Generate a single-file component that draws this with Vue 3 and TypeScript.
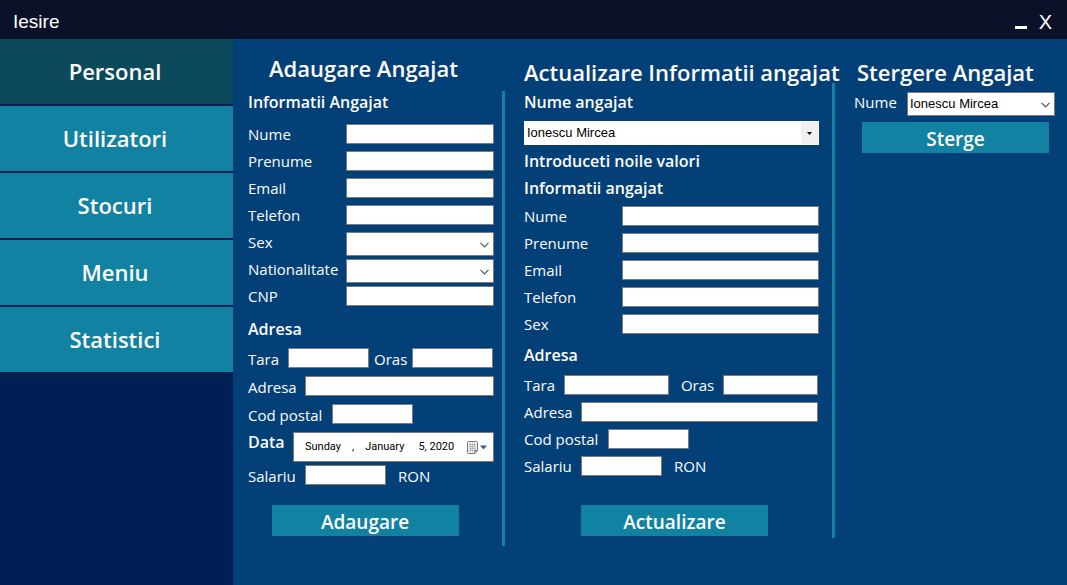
<script setup lang="ts">
import { ref } from 'vue'

const sections = ['Personal', 'Utilizatori', 'Stocuri', 'Meniu', 'Statistici']
const active = ref('Personal')

const employees = ['Ionescu Mircea']
const selectedUpdate = ref(employees[0])
const selectedDelete = ref(employees[0])

interface Field {
  id: string
  label: string
  kind: 'text' | 'select'
}

const newFields: Field[] = [
  { id: 'new-nume', label: 'Nume', kind: 'text' },
  { id: 'new-prenume', label: 'Prenume', kind: 'text' },
  { id: 'new-email', label: 'Email', kind: 'text' },
  { id: 'new-telefon', label: 'Telefon', kind: 'text' },
  { id: 'new-sex', label: 'Sex', kind: 'select' },
  { id: 'new-nationalitate', label: 'Nationalitate', kind: 'select' },
  { id: 'new-cnp', label: 'CNP', kind: 'text' },
]

const editFields: Field[] = [
  { id: 'edit-nume', label: 'Nume', kind: 'text' },
  { id: 'edit-prenume', label: 'Prenume', kind: 'text' },
  { id: 'edit-email', label: 'Email', kind: 'text' },
  { id: 'edit-telefon', label: 'Telefon', kind: 'text' },
  { id: 'edit-sex', label: 'Sex', kind: 'text' },
]
</script>

<template>
  <div class="app">
    <header class="titlebar">
      <button type="button" class="exit">Iesire</button>
      <div class="window-controls">
        <button type="button" class="minimize" aria-label="Minimizare">
          <svg width="12" height="15" viewBox="0 0 12 15"><rect y="12" width="12" height="3" fill="#fff" /></svg>
        </button>
        <button type="button" class="close" aria-label="Inchide">X</button>
      </div>
    </header>

    <div class="body">
      <nav class="sidebar">
        <button
          v-for="s in sections"
          :key="s"
          type="button"
          class="nav-item"
          :class="{ active: s === active }"
          @click="active = s"
        >{{ s }}</button>
      </nav>

      <main class="panels">
        <form class="panel add" @submit.prevent>
          <h1 class="title centered">Adaugare Angajat</h1>
          <h2 class="heading">Informatii Angajat</h2>
          <div class="fields">
            <div v-for="f in newFields" :key="f.id" class="row">
              <label class="wide-label" :for="f.id">{{ f.label }}</label>
              <input v-if="f.kind === 'text'" :id="f.id" type="text" class="grow" />
              <span v-else class="combo grow">
                <select :id="f.id"><option value=""></option></select>
                <svg class="chevron" width="9" height="6" viewBox="0 0 9 6"><path d="M.5 .8 4.5 4.8 8.5 .8" fill="none" stroke="#555" stroke-width="1.2" /></svg>
              </span>
            </div>
          </div>

          <h2 class="heading">Adresa</h2>
          <div class="fields loose">
            <div class="row split">
              <label class="tara-label" for="new-tara">Tara</label>
              <input id="new-tara" type="text" class="grow" />
              <label class="oras-label" for="new-oras">Oras</label>
              <input id="new-oras" type="text" class="grow" />
            </div>
            <div class="row">
              <label class="short-label" for="new-adresa">Adresa</label>
              <input id="new-adresa" type="text" class="grow" />
            </div>
            <div class="row">
              <label class="postal-label" for="new-cod">Cod postal</label>
              <input id="new-cod" type="text" class="small" />
            </div>
            <div class="row date-row">
              <label class="date-label" for="new-data">Data</label>
              <button id="new-data" type="button" class="date grow" aria-haspopup="dialog">
                <span>Sunday</span><span>,</span><span>January</span><span class="day">5, 2020</span>
                <svg width="20" height="13" viewBox="0 0 20 13">
                  <path d="M.5 1.5Q.5.5 1.5.5H9.500Q10.500.5 10.500 1.500V9.500L8 12.500H1.500Q.5 12.500.5 11.500Z" fill="#f3f1f1" stroke="#7d7474" />
                  <path d="M2 3.500H9M2 5.500H9M2 7.500H9M2 9.500H7M3.500 2V11M5.500 2V11M7.500 2V11" stroke="#a9a9b5" stroke-width=".7" />
                  <path d="M10.500 9.500H8V12.500" fill="none" stroke="#7d7474" />
                  <path d="M13 4.500H20L16.500 8.500Z" fill="#40587c" />
                </svg>
              </button>
            </div>
            <div class="row">
              <label class="short-label" for="new-salariu">Salariu</label>
              <input id="new-salariu" type="text" class="small" />
              <span class="unit">RON</span>
            </div>
          </div>
          <button type="submit" class="action">Adaugare</button>
        </form>

        <div class="divider"></div>

        <form class="panel edit" @submit.prevent>
          <h1 class="title">Actualizare Informatii angajat</h1>
          <label class="heading" for="edit-angajat">Nume angajat</label>
          <span class="combo flat">
            <select id="edit-angajat" v-model="selectedUpdate">
              <option v-for="e in employees" :key="e">{{ e }}</option>
            </select>
            <span class="drop"><svg width="5" height="3" viewBox="0 0 5 3"><path d="M0 0H5L2.500 3Z" fill="#000" /></svg></span>
          </span>
          <h2 class="heading">Introduceti noile valori</h2>
          <h2 class="heading">Informatii angajat</h2>
          <div class="fields">
            <div v-for="f in editFields" :key="f.id" class="row">
              <label class="wide-label" :for="f.id">{{ f.label }}</label>
              <input :id="f.id" type="text" class="grow" />
            </div>
          </div>

          <h2 class="heading">Adresa</h2>
          <div class="fields">
            <div class="row split">
              <label class="tara-label" for="edit-tara">Tara</label>
              <input id="edit-tara" type="text" class="grow country" />
              <label class="oras-label" for="edit-oras">Oras</label>
              <input id="edit-oras" type="text" class="grow city" />
            </div>
            <div class="row split">
              <label class="short-label" for="edit-adresa">Adresa</label>
              <input id="edit-adresa" type="text" class="grow" />
            </div>
            <div class="row">
              <label class="postal-label" for="edit-cod">Cod postal</label>
              <input id="edit-cod" type="text" class="small" />
            </div>
            <div class="row">
              <label class="short-label" for="edit-salariu">Salariu</label>
              <input id="edit-salariu" type="text" class="small" />
              <span class="unit">RON</span>
            </div>
          </div>
          <button type="submit" class="action">Actualizare</button>
        </form>

        <div class="divider second"></div>

        <form class="panel remove" @submit.prevent>
          <h1 class="title">Stergere Angajat</h1>
          <div class="row">
            <label for="del-angajat">Nume</label>
            <span class="combo grow">
              <select id="del-angajat" v-model="selectedDelete">
                <option v-for="e in employees" :key="e">{{ e }}</option>
              </select>
              <svg class="chevron" width="9" height="6" viewBox="0 0 9 6"><path d="M.5 .8 4.5 4.8 8.5 .8" fill="none" stroke="#555" stroke-width="1.2" /></svg>
            </span>
          </div>
          <button type="submit" class="action">Sterge</button>
        </form>
      </main>
    </div>
  </div>
</template>

<style>
body {
  margin: 0;
  background: #034078;
}
</style>

<style scoped>
.app {
  display: flex;
  flex-direction: column;
  min-height: 100vh;
  background: #034078;
  color: #fefcfb;
  font-family: 'Open Sans', 'Noto Sans', sans-serif;
  font-size: 15px;
  line-height: 20px;
}
* {
  box-sizing: border-box;
}
button,
input,
select {
  margin: 0;
  padding: 0;
  border: 0;
  border-radius: 0;
  font: inherit;
  color: inherit;
}
button {
  background: none;
  cursor: pointer;
}
h1,
h2 {
  margin: 0;
}

.titlebar {
  display: flex;
  align-items: center;
  justify-content: space-between;
  height: 39px;
  padding: 4px 15px 0 13px;
  background: #0a1128;
  color: #fff;
  font-family: 'Liberation Sans', Arial, sans-serif;
  font-size: 19px;
}
.window-controls {
  display: flex;
  align-items: center;
  gap: 12px;
}
.minimize svg {
  display: block;
}
.close {
  font-size: 20px;
}

.body {
  display: flex;
  flex: 1;
}
.sidebar {
  display: flex;
  flex-direction: column;
  flex: 0 0 233px;
  gap: 2px;
  background: #001f54;
}
.nav-item {
  height: 65px;
  padding: 0 3px 2px 0;
  background: #1282a2;
  font-size: 22px;
  font-weight: 600;
}
.nav-item.active {
  background: #0c4a5b;
}

.panels {
  flex: 1;
  min-width: 0;
  display: grid;
  grid-template-columns: minmax(0, 269fr) 3px minmax(0, 327fr) 3px minmax(0, 232fr);
  align-items: start;
}
.divider {
  height: 455px;
  margin-top: 52px;
  background: #1282a2;
}
.divider.second {
  margin-top: 44px;
}
.panel {
  display: flex;
  flex-direction: column;
}
.add {
  padding: 14px 8px 0 15px;
}
.edit {
  padding: 18px 13px 0 19px;
}
.remove {
  padding: 18px 12px 0 19px;
}
.title {
  font-size: 22px;
  font-weight: 600;
  line-height: 30px;
  white-space: nowrap;
}
.title.centered {
  padding-right: 15px;
  text-align: center;
}
.heading {
  font-size: 16px;
  font-weight: 600;
  line-height: 20px;
}
.add .heading {
  margin: 9px 0 12px;
}
.fields {
  display: flex;
  flex-direction: column;
  gap: 7px;
}
.fields.loose {
  gap: 8px;
}
.row {
  display: flex;
  align-items: flex-start;
  height: 20px;
}
.row.split {
  padding-right: 1px;
}
.row.date-row {
  height: 25px;
}
.loose label,
.loose .unit {
  line-height: 22px;
}
.grow {
  flex: 1 1 0;
  min-width: 0;
}
.country {
  flex-grow: 105;
}
.city {
  flex-grow: 95;
}
.small {
  width: 81px;
}
.wide-label {
  width: 98px;
}
.tara-label {
  width: 40px;
}
.oras-label {
  width: 43px;
  padding-left: 5px;
}
.edit .oras-label {
  width: 54px;
  padding-left: 12px;
}
.short-label {
  width: 57px;
}
.postal-label {
  width: 84px;
}
.loose .date-label {
  width: 45px;
  font-size: 16px;
  font-weight: 600;
  line-height: 20px;
}
.unit {
  padding-left: 12px;
}

input,
.date,
.combo {
  height: 20px;
  border: 1px solid #7a7a7a;
  background: #fff;
  color: #000;
  font-family: 'Liberation Sans', Arial, sans-serif;
  font-size: 13px;
}
.combo {
  display: grid;
  grid-template-columns: minmax(0, 1fr) 17px;
  align-items: center;
  height: 24px;
}
.combo select {
  grid-area: 1 / 1 / 2 / 3;
  width: 100%;
  height: 22px;
  padding: 0 18px 0 2px;
  appearance: none;
  background: transparent;
}
.chevron {
  grid-area: 1 / 2;
  justify-self: center;
  margin-top: 2px;
  pointer-events: none;
}
.combo.flat {
  border-color: #fff;
}
.drop {
  grid-area: 1 / 2;
  display: grid;
  place-items: center;
  height: 22px;
  background: #f0f0f0;
  pointer-events: none;
}
.date {
  display: flex;
  align-items: center;
  gap: 11px;
  height: 30px;
  padding: 0 6px 0 11px;
  font-family: Roboto, 'Liberation Sans', sans-serif;
  font-size: 11px;
  white-space: nowrap;
}
.date .day {
  margin: 0 auto 0 3px;
}

.action {
  align-self: center;
  width: 187px;
  height: 31px;
  padding-top: 3px;
  background: #1282a2;
  font-size: 19px;
  font-weight: 600;
  line-height: 26px;
}
.add .fields + .heading {
  margin-top: 13px;
  margin-bottom: 9px;
}
.add .action {
  margin: 20px 12px 0 0;
}
.edit > label.heading {
  margin: 5px 0 9px;
}
.edit > .combo {
  margin-bottom: 6px;
}
.edit > h2.heading {
  margin-bottom: 7px;
}
.edit > .heading + .fields {
  margin-top: 1px;
}
.edit > .fields + .heading {
  margin-top: 11px;
  margin-bottom: 9px;
}
.edit .action {
  margin: 29px 0 0 6px;
}
.remove .title {
  padding-left: 3px;
}
.remove .row {
  height: 24px;
  margin: 5px 0 6px;
}
.remove label {
  width: 53px;
}
.remove .action {
  margin-left: 2px;
}
</style>
